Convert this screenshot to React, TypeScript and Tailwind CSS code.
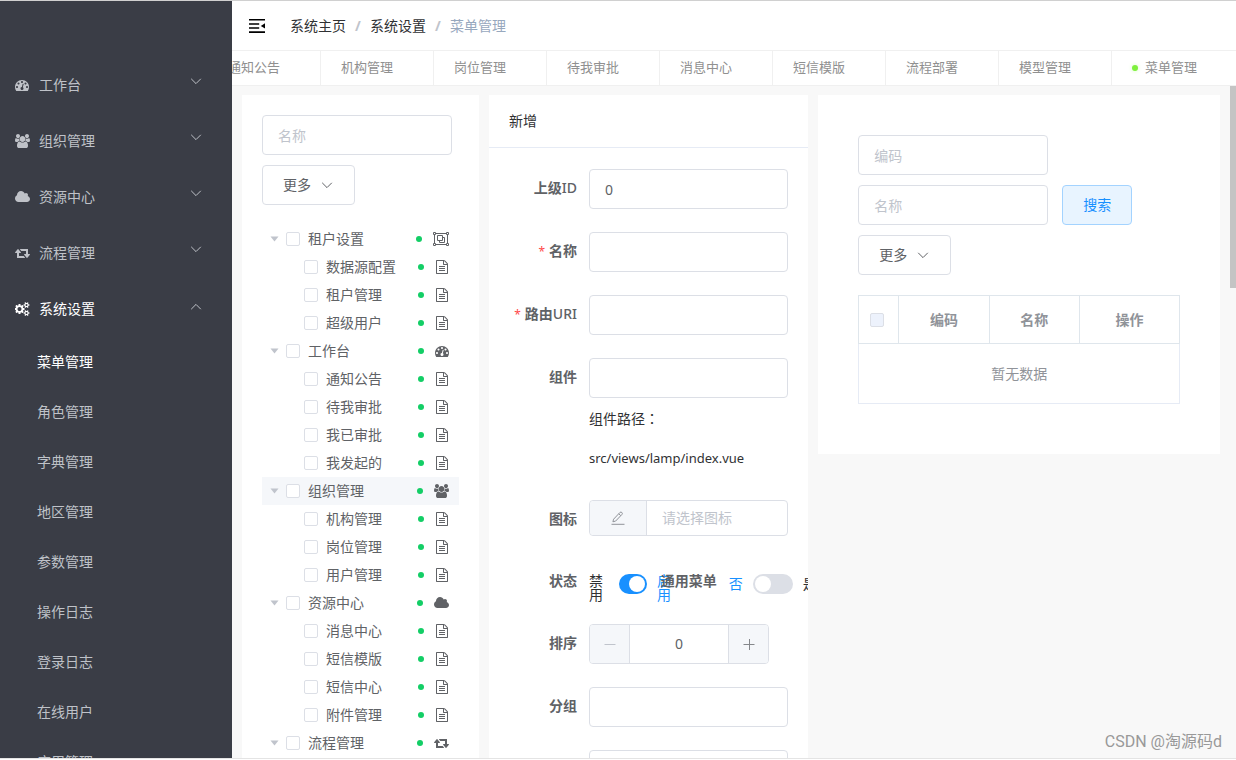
import type { ReactNode } from "react";

interface GlyphProps {
  className?: string;
}

interface TreeItem {
  name: string;
  icon?: ReactNode;
  active?: boolean;
  children?: TreeItem[];
}

const DashboardIcon = ({ className }: GlyphProps) => (
  <svg className={className} width="14" height="14" viewBox="0 0 1792 1792" fill="currentColor" aria-hidden="true">
    <path d="M384 1152q0-53-37.5-90.5t-90.5-37.5-90.5 37.5-37.5 90.5 37.5 90.5 90.5 37.5 90.5-37.5 37.5-90.5zm192-448q0-53-37.5-90.5t-90.5-37.5-90.5 37.5-37.5 90.5 37.5 90.5 90.5 37.5 90.5-37.5 37.5-90.5zm428 481l101-382q6-26-7.5-48.5t-38.5-29.5-48 6.5-30 39.5l-101 382q-60 5-107 43.5t-63 98.5q-20 77 20 146t117 89 146-20 89-117q16-60-6-117t-72-91zm660-33q0-53-37.5-90.5t-90.5-37.5-90.5 37.5-37.5 90.5 37.5 90.5 90.5 37.5 90.5-37.5 37.5-90.5zm-640-640q0-53-37.5-90.5t-90.5-37.5-90.5 37.5-37.5 90.5 37.5 90.5 90.5 37.5 90.5-37.5 37.5-90.5zm448 192q0-53-37.5-90.5t-90.5-37.5-90.5 37.5-37.5 90.5 37.5 90.5 90.5 37.5 90.5-37.5 37.5-90.5zm320 448q0 261-141 483-19 29-54 29h-1402q-35 0-54-29-141-221-141-483 0-182 71-348t191-286 286-191 348-71 348 71 286 191 191 286 71 348z" />
  </svg>
);

const UsersIcon = ({ className }: GlyphProps) => (
  <svg className={className} width="15" height="14" viewBox="0 0 1920 1792" fill="currentColor" aria-hidden="true">
    <path d="M593 896q-162 5-265 128h-134q-82 0-138-40.5t-56-118.5q0-353 124-353 6 0 43.5 21t97.5 42.5 119 21.5q67 0 133-23-5 37-5 66 0 139 81 256zm1071 637q0 120-73 189.5t-194 69.5h-874q-121 0-194-69.5t-73-189.5q0-53 3.5-103.5t14-109 26.5-108.5 43-97.5 62-81 85.5-53.5 111.5-20q10 0 43 21.5t73 48 107 48 135 21.5 135-21.5 107-48 73-48 43-21.5q61 0 111.5 20t85.5 53.5 62 81 43 97.5 26.5 108.5 14 109 3.5 103.5zm-1024-1277q0 106-75 181t-181 75-181-75-75-181 75-181 181-75 181 75 75 181zm704 384q0 159-112.5 271.5t-271.5 112.5-271.5-112.5-112.5-271.5 112.5-271.5 271.5-112.5 271.5 112.5 112.5 271.5zm576 225q0 78-56 118.5t-138 40.5h-134q-103-123-265-128 81-117 81-256 0-29-5-66 66 23 133 23 59 0 119-21.5t97.5-42.5 43.5-21q124 0 124 353zm-128-609q0 106-75 181t-181 75-181-75-75-181 75-181 181-75 181 75 75 181z" />
  </svg>
);

const CloudIcon = ({ className }: GlyphProps) => (
  <svg className={className} width="15" height="14" viewBox="64 0 1920 1792" fill="currentColor" aria-hidden="true">
    <path d="M1984 1152q0 159-112.5 271.5t-271.5 112.5h-1088q-185 0-316.5-131.5t-131.5-316.5q0-132 71-241.5t187-163.5q-2-28-2-43 0-212 150-362t362-150q158 0 286.5 88t187.5 230q70-62 166-62 106 0 181 75t75 181q0 75-41 138 129 30 213 134.5t84 239.5z" />
  </svg>
);

const RetweetIcon = ({ className }: GlyphProps) => (
  <svg className={className} width="15" height="14" viewBox="0 0 1920 1792" fill="currentColor" aria-hidden="true">
    <path d="M1280 1504q0 13-9.5 22.5t-22.5 9.5h-960q-8 0-13.5-2t-9-7-5.5-8-3-11.5-1-11.5v-600h-192q-26 0-45-19t-19-45q0-24 15-41l320-384q19-22 49-22t49 22l320 384q15 17 15 41 0 26-19 45t-45 19h-192v384h576q16 0 25 11l160 192q7 10 7 21zm640-416q0 24-15 41l-320 384q-20 23-49 23t-49-23l-320-384q-15-17-15-41 0-26 19-45t45-19h192v-384h-576q-16 0-25-12l-160-192q-7-9-7-20 0-13 9.5-22.5t22.5-9.5h960q8 0 13.5 2t9 7 5.5 8 3 11.5 1 11.5v600h192q26 0 45 19t19 45z" />
  </svg>
);

const CogsIcon = ({ className }: GlyphProps) => (
  <svg className={className} width="15" height="14" viewBox="0 0 1920 1792" fill="currentColor" aria-hidden="true">
    <path d="M832 896q0-106-75-181t-181-75-181 75-75 181 75 181 181 75 181-75 75-181zm768 512q0-52-38-90t-90-38-90 38-38 90q0 53 37.5 90.5t90.5 37.5 90.5-37.5 37.5-90.5zm0-1024q0-52-38-90t-90-38-90 38-38 90q0 53 37.5 90.5t90.5 37.5 90.5-37.5 37.5-90.5zm-384 421v185q0 10-7 19.5t-16 10.5l-155 24q-11 35-32 76 34 48 90 115 7 11 7 20 0 12-7 19-23 30-82.5 89.5t-78.5 59.5q-11 0-21-7l-115-90q-37 19-77 31-11 108-23 155-7 24-30 24h-186q-11 0-20-7.5t-10-17.5l-23-153q-34-10-75-31l-118 89q-7 7-20 7-11 0-21-8-144-133-144-160 0-9 7-19 10-14 41-53t47-61q-23-44-35-82l-152-24q-10-1-17-9.5t-7-19.5v-185q0-10 7-19.5t16-10.5l155-24q11-35 32-76-34-48-90-115-7-11-7-20 0-12 7-20 22-30 82-89t79-59q11 0 21 7l115 90q34-18 77-32 11-108 23-154 7-24 30-24h186q11 0 20 7.5t10 17.5l23 153q34 10 75 31l118-89q8-7 20-7 11 0 21 8 144 133 144 160 0 8-7 19-12 16-42 54t-45 60q23 48 34 82l152 23q10 2 17 10.5t7 19.5zm640 533v140q0 16-149 31-12 27-30 52 51 113 51 138 0 4-4 7-122 71-124 71-8 0-46-47t-52-68q-20 2-30 2t-30-2q-14 21-52 68t-46 47q-2 0-124-71-4-3-4-7 0-25 51-138-18-25-30-52-149-15-149-31v-140q0-16 149-31 13-29 30-52-51-113-51-138 0-4 4-7 4-2 35-20t59-34 30-16q8 0 46 46.5t52 67.5q20-2 30-2t30 2q51-71 92-112l6-2q4 0 124 70 4 3 4 7 0 25-51 138 17 23 30 52 149 15 149 31zm0-1024v140q0 16-149 31-12 27-30 52 51 113 51 138 0 4-4 7-122 71-124 71-8 0-46-47t-52-68q-20 2-30 2t-30-2q-14 21-52 68t-46 47q-2 0-124-71-4-3-4-7 0-25 51-138-18-25-30-52-149-15-149-31v-140q0-16 149-31 13-29 30-52-51-113-51-138 0-4 4-7 4-2 35-20t59-34 30-16q8 0 46 46.5t52 67.5q20-2 30-2t30 2q51-71 92-112l6-2q4 0 124 70 4 3 4 7 0 25-51 138 17 23 30 52 149 15 149 31z" />
  </svg>
);

const FileIcon = ({ className }: GlyphProps) => (
  <svg className={className} width="12" height="14" viewBox="128 0 1536 1792" fill="currentColor" aria-hidden="true">
    <path d="M1596 380q28 28 48 76t20 88v1152q0 40-28 68t-68 28h-1344q-40 0-68-28t-28-68v-1600q0-40 28-68t68-28h896q40 0 88 20t76 48zm-444-244v376h376q-10-29-22-41l-313-313q-12-12-41-22zm384 1528v-1024h-416q-40 0-68-28t-28-68v-416h-768v1536h1280zm-1024-864q0-14 9-23t23-9h704q14 0 23 9t9 23v64q0 14-9 23t-23 9h-704q-14 0-23-9t-9-23v-64zm736 224q14 0 23 9t9 23v64q0 14-9 23t-23 9h-704q-14 0-23-9t-9-23v-64q0-14 9-23t23-9h704zm0 256q14 0 23 9t9 23v64q0 14-9 23t-23 9h-704q-14 0-23-9t-9-23v-64q0-14 9-23t23-9h704z" />
  </svg>
);

const ObjectGroupIcon = () => (
  <svg width="16" height="14" viewBox="0 0 16 14" fill="none" stroke="currentColor" aria-hidden="true">
    <path d="M3 1.5h10M3 12.5h10M1.5 3v8M14.5 3v8" />
    <path d="M.5.5h2v2h-2zM13.5.5h2v2h-2zM.5 11.5h2v2h-2zM13.5 11.5h2v2h-2z" />
    <path d="M4.5 3.5h5v5h-5zM9.5 5.5h2v5h-5v-2" />
  </svg>
);

const Chevron = ({ className }: GlyphProps) => (
  <svg className={className} width="12" height="12" viewBox="0 0 12 12" fill="none" stroke="currentColor" aria-hidden="true">
    <path d="M1.2 3.8 6 8.6l4.8-4.8" />
  </svg>
);

const EditIcon = () => (
  <svg width="14" height="14" viewBox="0 0 14 14" fill="none" stroke="currentColor" aria-hidden="true">
    <path d="M2.6 8.2 8.9 1.5q1-.9 2 0t0 2L4.6 10.1l-2.7.7zM7.8 2.8l2 1.9M.5 13.3h13" />
  </svg>
);

const FoldIcon = () => (
  <svg width="16" height="14" viewBox="0 0 16 14" fill="currentColor" aria-hidden="true">
    <path d="M0 0h16v1.6H0zM0 4.2h10.2v1.6H0zM0 8.2h10.2v1.6H0zM0 12.3h16v1.6H0zM16 4.2v5.4L11.8 6.9z" />
  </svg>
);

const menus = [
  { name: "工作台", icon: <DashboardIcon /> },
  { name: "组织管理", icon: <UsersIcon /> },
  { name: "资源中心", icon: <CloudIcon /> },
  { name: "流程管理", icon: <RetweetIcon /> },
  { name: "系统设置", icon: <CogsIcon />, open: true },
];

const subMenus = [
  "菜单管理",
  "角色管理",
  "字典管理",
  "地区管理",
  "参数管理",
  "操作日志",
  "登录日志",
  "在线用户",
  "应用管理",
];

const tabs = [
  "通知公告",
  "机构管理",
  "岗位管理",
  "待我审批",
  "消息中心",
  "短信模版",
  "流程部署",
  "模型管理",
];

const tree: TreeItem[] = [
  {
    name: "租户设置",
    icon: <ObjectGroupIcon />,
    children: [{ name: "数据源配置" }, { name: "租户管理" }, { name: "超级用户" }],
  },
  {
    name: "工作台",
    icon: <DashboardIcon />,
    children: [{ name: "通知公告" }, { name: "待我审批" }, { name: "我已审批" }, { name: "我发起的" }],
  },
  {
    name: "组织管理",
    icon: <UsersIcon />,
    active: true,
    children: [{ name: "机构管理" }, { name: "岗位管理" }, { name: "用户管理" }],
  },
  {
    name: "资源中心",
    icon: <CloudIcon />,
    children: [{ name: "消息中心" }, { name: "短信模版" }, { name: "短信中心" }, { name: "附件管理" }],
  },
  { name: "流程管理", icon: <RetweetIcon /> },
];

const inputClass =
  "h-10 rounded border border-[#dcdfe6] bg-white px-[15px] text-sm text-[#606266] outline-none placeholder:text-[#c0c4cc] focus:border-[#1890ff]";

const checkboxClass = "size-3.5 shrink-0 appearance-none rounded-xs border border-[#dcdfe6] bg-white";

const Sidebar = () => (
  <aside className="w-[232px] shrink-0 overflow-hidden bg-[#3a3d46] pt-14 text-sm text-[#bfc2c8]">
    <ul>
      {menus.map((menu) => (
        <li key={menu.name}>
          <button
            type="button"
            className={`flex h-14 w-full cursor-pointer items-center pr-[30px] pl-[15px] ${menu.open ? "text-white" : ""}`}
          >
            <span className="w-6 shrink-0">{menu.icon}</span>
            <span className="flex-1 text-left">{menu.name}</span>
            <Chevron className={menu.open ? "mb-1 rotate-180 text-[#bfc2c8]" : "mb-2"} />
          </button>
        </li>
      ))}
    </ul>
    <ul>
      {subMenus.map((name, index) => (
        <li key={name}>
          <a href="#" className={`flex h-[50px] items-center pl-[37px] ${index === 0 ? "text-white" : ""}`}>
            {name}
          </a>
        </li>
      ))}
    </ul>
  </aside>
);

const Header = () => (
  <header className="flex h-[50px] shrink-0 items-center border-b border-[#f0f0f0] pl-[17px] text-sm">
    <button type="button" aria-label="折叠菜单" className="mr-[25px] cursor-pointer text-black">
      <FoldIcon />
    </button>
    <nav className="flex items-center">
      <a href="#" className="text-[#303133]">
        系统主页
      </a>
      <span className="w-6 text-center font-bold text-[#c0c4cc]">/</span>
      <a href="#" className="text-[#303133]">
        系统设置
      </a>
      <span className="w-6 text-center font-bold text-[#c0c4cc]">/</span>
      <span className="text-[#97a8be]">菜单管理</span>
    </nav>
  </header>
);

const TabBar = () => (
  <nav className="flex h-[35px] shrink-0 justify-end overflow-hidden border-b border-[#f0f0f0] text-[13px] text-[#909090]">
    {tabs.map((name) => (
      <a key={name} href="#" className="flex w-[113px] shrink-0 items-center border-r border-[#f0f0f0] pl-5">
        {name}
      </a>
    ))}
    <a href="#" className="flex w-[124px] shrink-0 items-center gap-[7px] pl-5">
      <span className="size-1.5 rounded-full bg-[#7ef03c] shadow-[0_0_4px_#d5f9c2]" />
      菜单管理
    </a>
  </nav>
);

const MoreButton = () => (
  <button
    type="button"
    className="flex h-10 w-[93px] cursor-pointer items-center gap-2.5 rounded border border-[#dcdfe6] bg-white pl-5 text-sm text-[#606266]"
  >
    更多
    <Chevron />
  </button>
);

const TreeRow = ({ item, child }: { item: TreeItem; child?: boolean }) => (
  <div
    className={`flex h-7 items-center pr-[10px] text-sm text-[#606266] ${child ? "pl-[42px]" : "pl-[7px]"} ${item.active ? "bg-[#f5f7fa]" : ""}`}
  >
    {!child && (
      <svg className="mr-[6px] text-[#c0c4cc]" width="11" height="6" viewBox="0 0 11 6" fill="currentColor" aria-hidden="true">
        <path d="M1.5.5h8l-4 5z" />
      </svg>
    )}
    <label className="flex items-center gap-2">
      <input type="checkbox" className={checkboxClass} />
      {item.name}
    </label>
    <span className="ml-auto size-1.5 rounded-full bg-[#13ce66]" />
    <span className="ml-[11px] flex min-w-3.5 justify-center">{item.icon ?? <FileIcon />}</span>
  </div>
);

const TreePanel = () => (
  <section className="h-full bg-white p-5">
    <input type="text" aria-label="名称" placeholder="名称" className={`mb-2.5 block w-[190px] ${inputClass}`} />
    <MoreButton />
    <div className="mt-5">
      {tree.map((item) => (
        <div key={item.name}>
          <TreeRow item={item} />
          {item.children?.map((sub) => (
            <TreeRow key={sub.name} item={sub} child />
          ))}
        </div>
      ))}
    </div>
  </section>
);

interface FieldProps {
  id: string;
  label: ReactNode;
  required?: boolean;
  children: ReactNode;
}

const labelClass = "h-10 w-20 shrink-0 pr-3 text-right leading-[38px] font-bold whitespace-nowrap text-[#606266]";

const Field = ({ id, label, required, children }: FieldProps) => (
  <div className="mb-[22px] flex">
    <label htmlFor={id} className={labelClass}>
      {required && <span className="mr-1 text-xs font-normal text-[#ff4949]">*</span>}
      {label}
    </label>
    <div className="min-w-0 flex-1">{children}</div>
  </div>
);

const TextField = ({ id, value }: { id: string; value?: string }) => (
  <div className="h-[41px]">
    <input id={id} type="text" defaultValue={value} className={`block w-full ${inputClass}`} />
  </div>
);

const FormPanel = () => (
  <section className="h-full overflow-hidden bg-white text-sm">
    <h2 className="flex h-[53px] items-center border-b border-[#e6ebf5] px-5 text-[#303133]">新增</h2>
    <form className="px-5 pt-[21px]">
      <Field id="parentId" label={<>上级<span className="font-medium">ID</span></>}>
        <TextField id="parentId" value="0" />
      </Field>
      <Field id="name" label="名称" required>
        <TextField id="name" />
      </Field>
      <Field id="path" label={<>路由<span className="font-medium">URI</span></>} required>
        <TextField id="path" />
      </Field>
      <Field id="component" label="组件">
        <input id="component" type="text" className={`block w-full ${inputClass}`} />
        <p className="font-['Noto_Sans_CJK_TC',sans-serif] leading-10 text-[#303133]">组件路径：</p>
        <p className="text-[13px] leading-10 text-[#303133]">src/views/lamp/index.vue</p>
      </Field>
      <Field id="icon" label="图标">
        <div className="mb-1 flex h-9 rounded border border-[#dcdfe6]">
          <button
            type="button"
            aria-label="选择图标"
            className="flex w-[57px] shrink-0 cursor-pointer items-center justify-center rounded-l border-r border-[#dcdfe6] bg-[#f5f7fa] text-[#909399]"
          >
            <EditIcon />
          </button>
          <input
            id="icon"
            type="text"
            placeholder="请选择图标"
            className="w-full min-w-0 rounded-r px-[15px] text-[#606266] outline-none placeholder:text-[#c0c4cc]"
          />
        </div>
      </Field>
      <div className="mb-[22px] flex h-10">
        <div className="flex w-1/2">
          <label htmlFor="state" className={labelClass}>
            状态
          </label>
          {/* labels are narrower than their text, so they wrap under the switch */}
          <div className="mt-3 flex h-5 text-[#303133]">
            <span className="mr-2.5 w-5 shrink-0 pr-1.5 leading-[14px]">禁用</span>
            <input
              id="state"
              type="checkbox"
              role="switch"
              defaultChecked
              className="flex h-5 w-7 shrink-0 appearance-none items-center justify-end rounded-full bg-[#1890ff] px-0.5 before:size-4 before:rounded-full before:bg-white"
            />
            <span className="ml-2.5 w-3.5 shrink-0 leading-[14px] text-[#1890ff]">启用</span>
          </div>
        </div>
        <div className="flex w-1/2">
          <label htmlFor="isGeneral" className={labelClass}>
            通用菜单
          </label>
          <div className="mt-3 flex h-5 gap-2.5 leading-5 text-[#303133]">
            <span className="shrink-0 text-[#1890ff]">否</span>
            <input
              id="isGeneral"
              type="checkbox"
              role="switch"
              className="flex h-5 w-10 shrink-0 appearance-none items-center rounded-full bg-[#dcdfe6] px-0.5 before:size-4 before:rounded-full before:bg-white"
            />
            <span className="shrink-0">是</span>
          </div>
        </div>
      </div>
      <Field id="sort" label="排序">
        <div className="mb-px flex h-10 w-[180px] overflow-hidden rounded border border-[#dcdfe6] text-[#606266]">
          <button type="button" aria-label="减少" className="flex w-10 shrink-0 items-center justify-center border-r border-[#dcdfe6] bg-[#f5f7fa] text-[#c0c4cc]">
            <svg width="12" height="12" viewBox="0 0 12 12" stroke="currentColor" aria-hidden="true">
              <path d="M.5 6.5h11" />
            </svg>
          </button>
          <input id="sort" type="text" defaultValue="0" className="w-full min-w-0 text-center outline-none" />
          <button type="button" aria-label="增加" className="flex w-10 shrink-0 items-center justify-center border-l border-[#dcdfe6] bg-[#f5f7fa] text-[#85878b]">
            <svg width="12" height="12" viewBox="0 0 12 12" stroke="currentColor" aria-hidden="true">
              <path d="M.5 6.5h11M6.5 1v11" />
            </svg>
          </button>
        </div>
      </Field>
      <Field id="group" label="分组">
        <TextField id="group" />
      </Field>
      <Field id="describe" label="描述">
        <TextField id="describe" />
      </Field>
    </form>
  </section>
);

const TablePanel = () => (
  <section className="bg-white px-10 pt-10 pb-[50px] text-sm">
    <input type="text" aria-label="编码" placeholder="编码" className={`mb-2.5 block w-[190px] ${inputClass}`} />
    <div className="mb-2.5 flex gap-3.5">
      <input type="text" aria-label="名称" placeholder="名称" className={`w-[190px] ${inputClass}`} />
      <button type="button" className="h-10 w-[70px] cursor-pointer rounded border border-[#a3d3ff] bg-[#e8f4ff] text-[#1890ff]">
        搜索
      </button>
    </div>
    <MoreButton />
    <table className="mt-5 w-full table-fixed border-collapse text-[#909399]">
      <thead>
        <tr className="h-12">
          <th className="w-10 border border-[#dfe6ec] pl-[11px]">
            <input type="checkbox" aria-label="全选" disabled className="block size-3.5 appearance-none rounded-xs border border-[#dcdfe6] bg-[#edf2fc]" />
          </th>
          <th className="border border-[#dfe6ec]">编码</th>
          <th className="border border-[#dfe6ec]">名称</th>
          <th className="w-[100px] border border-[#dfe6ec]">操作</th>
        </tr>
      </thead>
      <tbody>
        <tr className="h-[60px]">
          <td colSpan={4} className="border border-[#e6ebf5] text-center">
            暂无数据
          </td>
        </tr>
      </tbody>
    </table>
  </section>
);

export default function App() {
  return (
    <div className="relative flex h-screen overflow-hidden border-t border-[#d0d0d0] bg-white pb-px font-['Noto_Sans','Noto_Sans_CJK_SC',sans-serif]">
      <div className="flex min-w-0 flex-1 border-b border-[#e4e4e4]">
        <Sidebar />
        <div className="flex min-w-0 flex-1 flex-col">
          <Header />
          <TabBar />
          <main className="relative flex min-h-0 flex-1 items-start overflow-hidden bg-[#f8f8f8] pt-[9px] pr-[11px] pl-[5px]">
            <div className="w-1/4 px-[5px]">
              <TreePanel />
            </div>
            <div className="w-1/3 px-[5px]">
              <FormPanel />
            </div>
            <div className="w-5/12 px-[5px]">
              <TablePanel />
            </div>
            <div className="absolute top-0 right-0 h-[202px] w-1.5 bg-[#c4c4c4]" />
          </main>
        </div>
      </div>
      <div className="absolute right-3.5 bottom-1.5 font-[Roboto,'Noto_Sans_CJK_SC',sans-serif] text-base text-[#999]">
        CSDN @淘源码d
      </div>
    </div>
  );
}
